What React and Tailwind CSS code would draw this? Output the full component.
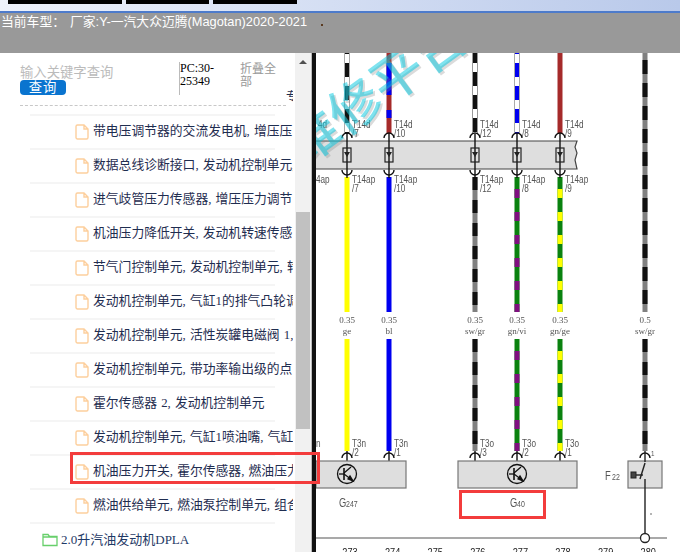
import { useId } from 'react';

const rows = [
  '带电压调节器的交流发电机, 增压压',
  '数据总线诊断接口, 发动机控制单元,',
  '进气歧管压力传感器, 增压压力调节',
  '机油压力降低开关, 发动机转速传感',
  '节气门控制单元, 发动机控制单元, 转',
  '发动机控制单元, 气缸1的排气凸轮调',
  '发动机控制单元, 活性炭罐电磁阀 1,',
  '发动机控制单元, 带功率输出级的点',
  '霍尔传感器 2, 发动机控制单元',
  '发动机控制单元, 气缸1喷油嘴, 气缸',
  '机油压力开关, 霍尔传感器, 燃油压力',
  '燃油供给单元, 燃油泵控制单元, 组合',
];

const FileIcon = () => (
  <svg width="14" height="16" viewBox="0 0 14 16" fill="none" className="shrink-0">
    <path d="M1 2.5 a1.5 1.5 0 0 1 1.5-1.5 h6.5 l4 4 v8.5 a1.5 1.5 0 0 1-1.5 1.5 h-9 a1.5 1.5 0 0 1-1.5-1.5 z M9 1 v4 h4" stroke="#fdcf9d" strokeWidth="1.4" />
  </svg>
);

const FolderIcon = () => (
  <svg width="16" height="14" viewBox="0 0 16 14" fill="none" className="shrink-0">
    <path d="M1 12.5 v-11 h5 l1.5 2 h7.5 v9 z M1 4 h14" stroke="#67cf6b" strokeWidth="1.3" />
  </svg>
);

const BLACK = '#111';
const GRAY = '#808080';
const GREEN = '#0a820f';
const PURPLE = '#800f80';
const YELLOW = '#ffff00';
const BLUE = '#0000f0';
const RED = '#a52a2a';

// one wire piece: base colour, plus optional repeating dashes
const Wire = ({ x, y1, y2, base, dash, pattern = '14 9', start = 0, edge }) => (
  <g>
    {edge && <line x1={x} x2={x} y1={y1} y2={y2} stroke={edge} strokeWidth="6" />}
    <line x1={x} x2={x} y1={y1} y2={y2} stroke={base} strokeWidth={edge ? 4 : 5} />
    {dash && (
      <line x1={x} x2={x} y1={y1} y2={y2} stroke={dash} strokeWidth={edge ? 4 : 5} strokeDasharray={pattern} strokeDashoffset={-start} />
    )}
  </g>
);

const Pin = ({ x, y, flip }) => (
  <path
    d={flip ? `M${x - 5} ${y - 3} a5 5 0 0 0 10 0` : `M${x - 5} ${y + 3} a5 5 0 0 1 10 0`}
    fill="none"
    stroke="#111"
    strokeWidth="1.4"
  />
);

// the drawing's sans labels are narrow, so they get squeezed horizontally
const Label = ({ x, y, children, size = 10.5, fill = '#555', anchor = 'start', sx = 0.78 }) => (
  <text
    transform={`translate(${x} ${y}) scale(${sx} 1)`}
    fontSize={size}
    fill={fill}
    textAnchor={anchor}
    fontFamily='"Liberation Sans", sans-serif'
  >
    {children}
  </text>
);

const Gauge = ({ x, y, children }) => (
  <text x={x} y={y} fontSize="9" fill="#555" textAnchor="middle" fontFamily='"Liberation Serif", serif'>
    {children}
  </text>
);

const columns = [
  { x: 347, p: '7', top: { base: '#fff', dash: BLACK, edge: '#aaa', start: 10 }, low: { base: YELLOW }, size: '0.35', code: 'ge', t3: 'T3n', pin: '2' },
  { x: 389, p: '10', top: { base: RED, dash: BLUE, pattern: '32 15 8 100', start: 10 }, low: { base: BLUE }, size: '0.35', code: 'bl', t3: 'T3n', pin: '1' },
  { x: 475, p: '12', top: { base: '#fff', dash: BLACK, edge: '#999', start: -4 }, low: { base: GRAY, dash: BLACK, pattern: '13 10' }, size: '0.35', code: 'sw/gr', t3: 'T3o', pin: '3' },
  { x: 517, p: '8', top: { base: '#fff', dash: BLUE, edge: '#aaa', start: 10 }, low: { base: GREEN, dash: PURPLE, pattern: '9 14', start: 12 }, size: '0.35', code: 'gn/vi', t3: 'T3o', pin: '2' },
  { x: 560, p: '9', top: { base: RED }, low: { base: GREEN, dash: YELLOW, pattern: '9 14', start: 12 }, size: '0.35', code: 'gn/ge', t3: 'T3o', pin: '1' },
];

const Sensor = ({ cx }) => (
  <g fill="none" stroke="#111" strokeWidth="1.3">
    <circle cx={cx} cy="474" r="9.5" />
    <line x1={cx - 3} x2={cx - 3} y1="468" y2="480" strokeWidth="1.6" />
    <line x1={cx - 8} x2={cx - 3} y1="474" y2="474" />
    <line x1={cx - 3} x2={cx + 4} y1="473" y2="467" />
    <line x1={cx - 3} x2={cx + 5} y1="474" y2="480" strokeWidth="1.2" />
    <path d={`M${cx + 1} 479 L${cx + 6} 481 L${cx + 3} 476 z`} fill="#111" />
  </g>
);

const Diagram = () => {
  const clip = useId();
  return (
    <svg viewBox="316 53 364 499" width="364" height="499" className="block blur-[0.35px]">
      <defs>
        <clipPath id={clip}><rect x="316" y="53" width="364" height="499" /></clipPath>
      </defs>
      <rect x="316" y="53" width="364" height="499" fill="#fff" />

      {columns.map((c) => (
        <g key={c.x}>
          <Wire x={c.x} y1={53} y2={134} {...c.top} />
          <Wire x={c.x} y1={177} y2={312} {...c.low} />
          <Wire x={c.x} y1={339} y2={451} {...c.low} />
        </g>
      ))}
      <Wire x={645} y1={53} y2={312} base={GRAY} dash={BLACK} start={7} />
      <Wire x={645} y1={339} y2={451} base={GRAY} dash={BLACK} pattern="13 10" />

      {/* connector strip */}
      <path d="M316 141 H577 L575 147 L577 153 L575 160 L577 169 H316" fill="#dedede" stroke="#444" strokeWidth="1.2" />

      {columns.map((c) => (
        <g key={`pin-${c.x}`}>
          <line x1={c.x} x2={c.x} y1={134} y2={178} stroke="#111" strokeWidth="1.4" />
          <rect x={c.x - 4} y={148} width={8} height={14} fill="none" stroke="#222" strokeWidth="1.2" />
          <path d={`M${c.x - 3} 152 h6 l-3 5 z`} fill="#222" />
          <Pin x={c.x} y={135} />
          <Pin x={c.x} y={173} flip />
          <Label x={c.x + 5} y={128}>T14d</Label>
          <Label x={c.x + 5} y={137}>/{c.p}</Label>
          <Label x={c.x + 5} y={183}>T14ap</Label>
          <Label x={c.x + 5} y={192}>/{c.p}</Label>
          <Gauge x={c.x} y={323}>{c.size}</Gauge>
          <Gauge x={c.x} y={334}>{c.code}</Gauge>
          <line x1={c.x} x2={c.x} y1={451} y2={461} stroke="#111" strokeWidth="1.4" />
          <Pin x={c.x} y={455} />
          <Label x={c.x + 5} y={447}>{c.t3}</Label>
          <Label x={c.x + 5} y={456}>/{c.pin}</Label>
        </g>
      ))}
      <Label x={318} y={128}>4d</Label>
      <Label x={316} y={183}>4ap</Label>
      <Label x={316} y={447}>n</Label>
      <Gauge x={645} y={323}>0.5</Gauge>
      <Gauge x={645} y={334}>sw/gr</Gauge>
      <Pin x={645} y={455} />
      <Label x={651} y={456} size={8}>1</Label>

      {/* sensors */}
      <rect x="316" y="461" width="90" height="27" fill="#dedede" stroke="#777" strokeWidth="1.2" />
      <rect x="458" y="461" width="119" height="27" fill="#dedede" stroke="#777" strokeWidth="1.2" />
      <rect x="628" y="461" width="34" height="27" fill="#dedede" stroke="#777" strokeWidth="1.2" />
      <Sensor cx={347} />
      <Sensor cx={517} />

      {/* pressure switch F22 */}
      <g stroke="#222" fill="none">
        <line x1="645" x2="645" y1="451" y2="462" strokeWidth="1.4" />
        <line x1="645" x2="640" y1="463" y2="479" strokeWidth="1.4" />
        <line x1="645" x2="645" y1="479" y2="534" strokeWidth="1.4" />
        <line x1="636" x2="643" y1="475" y2="475" strokeWidth="1.4" />
        <rect x="631" y="472" width="5" height="6" fill="#444" />
      </g>
      <circle cx="651" cy="514" r="0.7" fill="#333" />

      <Label x={605} y={480} size={12}>F</Label>
      <Label x={612} y={480} size={9}>22</Label>
      <Label x={339} y={507} size={12}>G</Label>
      <Label x={346} y={507} size={9}>247</Label>
      <Label x={510} y={507} size={12}>G</Label>
      <Label x={517} y={507} size={9}>40</Label>

      {/* ground rail */}
      <line x1="316" x2="667" y1="538" y2="538" stroke="#555" strokeWidth="1.2" />
      <circle cx="645" cy="538" r="4.5" fill="#fff" stroke="#222" strokeWidth="1.3" />
      {[273, 274, 275, 276, 277, 278, 279, 280].map((n, i) => (
        <Label key={n} x={350 + i * 42.6} y={556} anchor="middle" size={10} sx={0.92} fill="#222">{n}</Label>
      ))}

      {/* watermark */}
      <g clipPath={`url(#${clip})`} fontSize="52" fontWeight="500" fontFamily='"Noto Sans CJK SC", sans-serif'>
        <text transform="translate(305 169) rotate(-36)" fill="#888" fillOpacity="0.3">维修平台</text>
        <text transform="translate(303 167) rotate(-36)" fill="#00c8e0" fillOpacity="0.5">维修平台</text>
      </g>
    </svg>
  );
};

export default function App() {
  return (
    <div className="w-[680px] h-[552px] overflow-hidden flex flex-col bg-white font-['Liberation_Serif','Noto_Sans_CJK_SC',serif]">
      {/* window strip */}
      <div className="h-[11px] shrink-0 flex gap-[4px] pl-[8px] bg-gradient-to-r from-[#eef2fb] to-[#b9c9ea]">
        <div className="w-[114px] h-[4px] bg-black" />
        <div className="w-[83px] h-[4px] bg-black" />
        <div className="w-[84px] h-[4px] bg-black" />
      </div>
      <div className="h-[2px] shrink-0 bg-[#4d7bcb]" />

      {/* current car bar */}
      <div className="h-[40px] shrink-0 bg-[#999999] flex items-start pl-[1px] pt-[1px] text-white text-[12.8px] leading-[15px] font-['Liberation_Sans','Noto_Sans_CJK_SC',sans-serif]">
        <span>当前车型：</span>
        <span className="ml-[5px]">厂家:Y-一汽大众迈腾(Magotan)2020-2021</span>
        <span className="ml-[14px] mt-[10px] w-[2px] h-[2px] bg-[#5a3a20]" />
      </div>

      <div className="flex flex-1 min-h-0">
        {/* tree panel */}
        <div className="w-[295px] shrink-0 overflow-hidden pr-[2px]">
          <div className="w-[293px] overflow-hidden">
            <div className="ml-[20px] w-[266px] h-[53px] border-b border-dashed border-[#c8c8c8] flex items-start">
              <div className="w-[159px] shrink-0 pt-[13px] flex flex-col items-start text-[13.33px]">
                <span className="text-[#bbbbbb] leading-[14px] whitespace-nowrap">输入关键字查询</span>
                <button className="w-[46px] h-[15px] rounded-[4px] bg-[#0a74cf] text-white text-[13.33px] leading-[15px] tracking-[1px]">查询</button>
              </div>
              <div className="w-[61px] shrink-0 h-[33px] mt-[9px] border-l border-[#bbbbbb] text-black text-[12px] leading-[13px]">
                <div className="w-[40px]">PC:30-25349</div>
              </div>
              <div className="w-[37px] shrink-0 mt-[10px] text-[#999999] text-[12px] leading-[13px]">折叠全部</div>
              <div className="ml-[9px] w-[7px] shrink-0 h-[14px] mt-[37px] overflow-hidden text-[#1f2d50] text-[12px] leading-[14px] whitespace-nowrap">专</div>
            </div>

            <div className="mt-[8px] h-[2px] ml-[30px] w-[245px] bg-[#f5f5f5]" />
            {rows.map((text) => (
              <div key={text} className="ml-[30px] w-[245px] h-[34px] border-b-2 border-[#f5f5f5] flex items-center pl-[45px] gap-[4px] whitespace-nowrap text-[12.8px] [word-spacing:1px] text-[#1f2d50]">
                <FileIcon />
                <span>{text}</span>
              </div>
            ))}
            <div className="ml-[42px] mt-[6px] flex items-center gap-[3px] text-[13px] text-[#1f3a66] whitespace-nowrap">
              <FolderIcon />
              <span>2.0升汽油发动机DPLA</span>
            </div>
          </div>
        </div>

        {/* scrollbar */}
        <div className="w-[17px] shrink-0 bg-[#f1f1f1] flex flex-col items-center border-r border-[#bbbbbb]">
          <div className="mt-[7px] w-0 h-0 border-x-[4px] border-x-transparent border-b-[4px] border-b-[#505050]" />
          <div className="mt-[148px] w-[14px] h-[217px] bg-[#c1c1c1]" />
        </div>

        <div className="w-[4px] shrink-0 bg-[#111]" />
        <Diagram />
      </div>

      {/* highlight boxes from the annotated screenshot */}
      <div className="absolute left-[70px] top-[452px] w-[250px] h-[32px] border-[3px] border-[#f33c3c]" />
      <div className="absolute left-[459px] top-[490px] w-[87px] h-[29px] border-[3px] border-[#f33c3c]" />
    </div>
  );
}
